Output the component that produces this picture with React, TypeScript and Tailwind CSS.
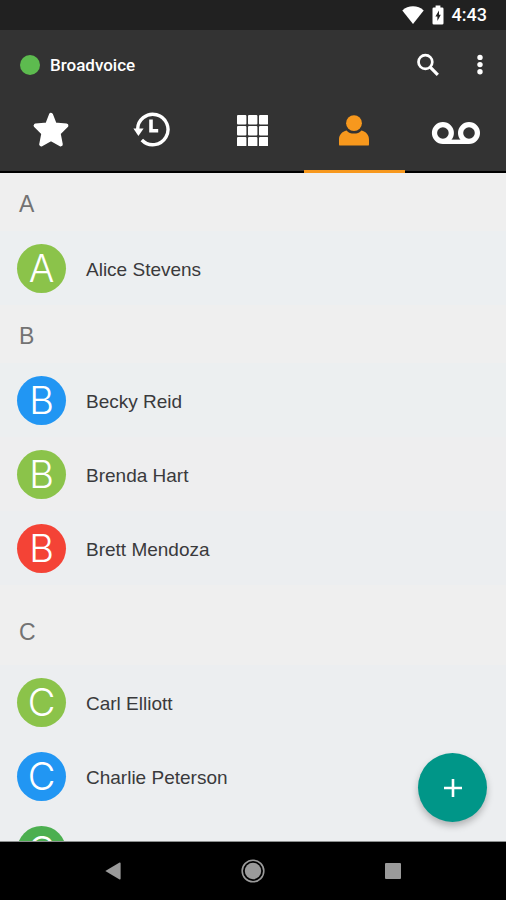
interface Contact {
    initial: string;
    name: string;
    color: string;
    row: string;
}

interface ContactGroup {
    letter: string;
    spacing: string;
    contacts: Contact[];
}

const groups: ContactGroup[] = [
    {
        letter: "A",
        spacing: "",
        contacts: [
            { initial: "A", name: "Alice Stevens", color: "bg-[#8bc34a]", row: "bg-[#eceff1]" },
        ],
    },
    {
        letter: "B",
        spacing: "pb-4",
        contacts: [
            { initial: "B", name: "Becky Reid", color: "bg-[#2196f3]", row: "bg-[#eceff0]" },
            { initial: "B", name: "Brenda Hart", color: "bg-[#8bc34a]", row: "bg-[#eeeeef]" },
            { initial: "B", name: "Brett Mendoza", color: "bg-[#f44336]", row: "bg-[#eceef0]" },
        ],
    },
    {
        letter: "C",
        spacing: "pt-1.5",
        contacts: [
            { initial: "C", name: "Carl Elliott", color: "bg-[#8bc34a]", row: "bg-[#eceef0]" },
            { initial: "C", name: "Charlie Peterson", color: "bg-[#2196f3]", row: "bg-[#eceef0]" },
            { initial: "C", name: "", color: "bg-[#4caf50]", row: "bg-[#eceef0]" },
        ],
    },
];

function StarIcon() {
    return (
        <svg width="38" height="38" viewBox="0 0 38 38" fill="#fff" stroke="#fff" strokeWidth="4" strokeLinejoin="round">
            <path d="M19 3.8 L22.8 13.4 L34.4 14.6 L26.6 22.2 L28.8 33.4 L19 28 L9.2 33.4 L11.4 22.2 L3.6 14.6 L15.2 13.4 Z" />
        </svg>
    )
}

function HistoryIcon() {
    return (
        <svg width="38" height="38" viewBox="0 0 38 38" fill="none" stroke="#fff" strokeWidth="3.4">
            <path d="M4.6 19 A15.2 15.2 0 1 1 8.8 29" />
            <path d="M18 8.5 V19.8 H25.2" strokeWidth="3.6" />
            <path d="M0.4 17.4 H10.6 L5.4 25 Z" fill="#fff" stroke="none" />
        </svg>
    )
}

function KeypadIcon() {
    const cells = [0, 11, 22];
    return (
        <svg width="31" height="31" viewBox="0 0 31 31" fill="#fff">
            {cells.map((y) =>
                cells.map((x) => <rect key={`${x}-${y}`} x={x} y={y} width="9.4" height="9.4" rx="1" />)
            )}
        </svg>
    )
}

function PersonIcon() {
    return (
        <svg width="30" height="31" viewBox="0 0 30 31" fill="#f7981d">
            <circle cx="15" cy="8.2" r="7.9" />
            <path d="M7.6 15.4 C9.4 17.5 12 18.6 15 18.6 C18 18.6 20.6 17.5 22.4 15.4 C27 16.4 30 19.8 30 24.4 V29.4 Q30 30.6 28.8 30.6 H1.2 Q0 30.6 0 29.4 V24.4 C0 19.8 3 16.4 7.6 15.4 Z" />
        </svg>
    )
}

function VoicemailIcon() {
    return (
        <svg className="mt-1.5" width="50" height="24" viewBox="0 0 50 24" fill="none" stroke="#fff" strokeWidth="5.2">
            <circle cx="12.9" cy="12" r="8.4" />
            <circle cx="39" cy="12" r="8.4" />
            <path d="M12.9 20.8 H39" strokeWidth="4.4" />
        </svg>
    )
}

const tabs = [
    { label: "Favorites", icon: <StarIcon />, active: false },
    { label: "History", icon: <HistoryIcon />, active: false },
    { label: "Keypad", icon: <KeypadIcon />, active: false },
    { label: "Contacts", icon: <PersonIcon />, active: true },
    { label: "Voicemail", icon: <VoicemailIcon />, active: false },
];

function StatusBar() {
    return (
        <div className="flex h-[30px] shrink-0 items-center justify-end bg-[#212121] pr-[19px] text-white">
            <svg className="mr-2" width="22" height="18" viewBox="0 0 22 18" fill="#fff">
                <path d="M11 18 L0.3 4.4 C3.2 1.6 7 0.3 11 0.3 C15 0.3 18.8 1.6 21.7 4.4 Z" />
            </svg>
            <svg className="mr-2" width="12" height="20" viewBox="0 0 12 20">
                <path fill="#fff" d="M3.6 0.6 H8.4 V2.4 H10.2 Q11.5 2.4 11.5 3.7 V18.2 Q11.5 19.5 10.2 19.5 H1.8 Q0.5 19.5 0.5 18.2 V3.7 Q0.5 2.4 1.8 2.4 H3.6 Z" />
                <path fill="#212121" d="M7 5.4 L3.4 11.6 H5.4 V16 L8.8 9.8 H7 Z" />
            </svg>
            <span className="text-[18px] leading-5 font-medium">4:43</span>
        </div>
    )
}

function Header() {
    return (
        <header className="shrink-0 bg-[#333333]">
            {/* Title row */}
            <div className="flex h-[70px] items-center pr-3 pl-5 text-white">
                <span className="mr-[10px] size-5 rounded-full bg-[#5dbb4f]" />
                <h1 className="flex-1 pt-0.5 text-[17px] font-medium">Broadvoice</h1>
                <button type="button" aria-label="Search" className="mr-[22px] flex size-8 items-center justify-center">
                    <svg width="24" height="24" viewBox="0 0 24 24" fill="none" stroke="#fff">
                        <circle cx="9.4" cy="9" r="6.9" strokeWidth="2.7" />
                        <path d="M14.2 14.2 L21.8 21.8" strokeWidth="3.2" />
                    </svg>
                </button>
                <button type="button" aria-label="More options" className="flex h-8 w-7 items-center justify-center">
                    <svg width="6" height="22" viewBox="0 0 6 22" fill="#fff">
                        <circle cx="3" cy="3.4" r="2.7" />
                        <circle cx="3" cy="10.6" r="2.7" />
                        <circle cx="3" cy="17.8" r="2.7" />
                    </svg>
                </button>
            </div>

            {/* Tabs */}
            <nav className="grid h-[73px] grid-cols-5">
                {tabs.map((tab) => (
                    <button
                        key={tab.label}
                        type="button"
                        aria-label={tab.label}
                        className={
                            tab.active
                                ? "flex flex-col border-b-3 border-[#f7981d]"
                                : "flex flex-col border-b-2 border-black"
                        }
                    >
                        <span className="flex h-15 w-full items-center justify-center">{tab.icon}</span>
                    </button>
                ))}
            </nav>
        </header>
    )
}

function ContactRow(props: Contact) {
    return (
        <li className={`flex h-[74px] items-center pl-[17px] ${props.row}`}>
            <span
                className={`flex size-[49px] shrink-0 items-center justify-center rounded-full font-['Inter',sans-serif] text-[38px] leading-none font-light text-white ${props.color}`}
            >
                {props.initial}
            </span>
            {props.name && (
                <span className="pt-1 pl-5 text-[19px] leading-6 text-[#3a3a3c]">{props.name}</span>
            )}
        </li>
    )
}

export default function App() {
    return (
        <div className="flex h-screen flex-col bg-[#efefef] font-['Roboto',sans-serif]">
            <StatusBar />
            <Header />

            {/* Contact list */}
            <main className="relative min-h-0 flex-1 overflow-hidden border-b border-[#8c8f8f] font-['Liberation_Sans',Arial,sans-serif]">
                {groups.map((group) => (
                    <section key={group.letter}>
                        <h2 className="flex h-[58px] items-center pt-1 pl-[19px] text-[23px] text-[#737373]">
                            {group.letter}
                        </h2>
                        <ul className={group.spacing}>
                            {group.contacts.map((contact, index) => (
                                <ContactRow key={index} {...contact} />
                            ))}
                        </ul>
                    </section>
                ))}

                <button
                    type="button"
                    aria-label="Add contact"
                    className="absolute right-[19px] bottom-[19px] flex size-[69px] items-center justify-center rounded-full bg-[#009688] shadow-[0_4px_7px_rgba(0,0,0,0.25)]"
                >
                    <svg width="18" height="18" viewBox="0 0 18 18" stroke="#fff" strokeWidth="2.6">
                        <path d="M9 0 V18 M0 9 H18" />
                    </svg>
                </button>
            </main>

            {/* System navigation */}
            <footer className="flex h-[58px] shrink-0 justify-center bg-black">
                <button type="button" aria-label="Back" className="flex w-[140px] items-center justify-center">
                    <svg width="16" height="18" viewBox="0 0 16 18" fill="#9a9a9a">
                        <path d="M0.3 9 L14.6 0.6 Q15.6 0.4 15.6 1.6 V16.4 Q15.6 17.6 14.6 17.4 Z" />
                    </svg>
                </button>
                <button type="button" aria-label="Home" className="flex w-[140px] items-center justify-center">
                    <svg width="24" height="24" viewBox="0 0 24 24">
                        <circle cx="12" cy="12" r="10.8" fill="none" stroke="#9a9a9a" strokeWidth="1.6" />
                        <circle cx="12" cy="12" r="8.2" fill="#9a9a9a" />
                    </svg>
                </button>
                <button type="button" aria-label="Recent apps" className="flex w-[140px] items-center justify-center">
                    <span className="size-4 rounded-[1px] bg-[#9a9a9a]" />
                </button>
            </footer>
        </div>
    )
}
